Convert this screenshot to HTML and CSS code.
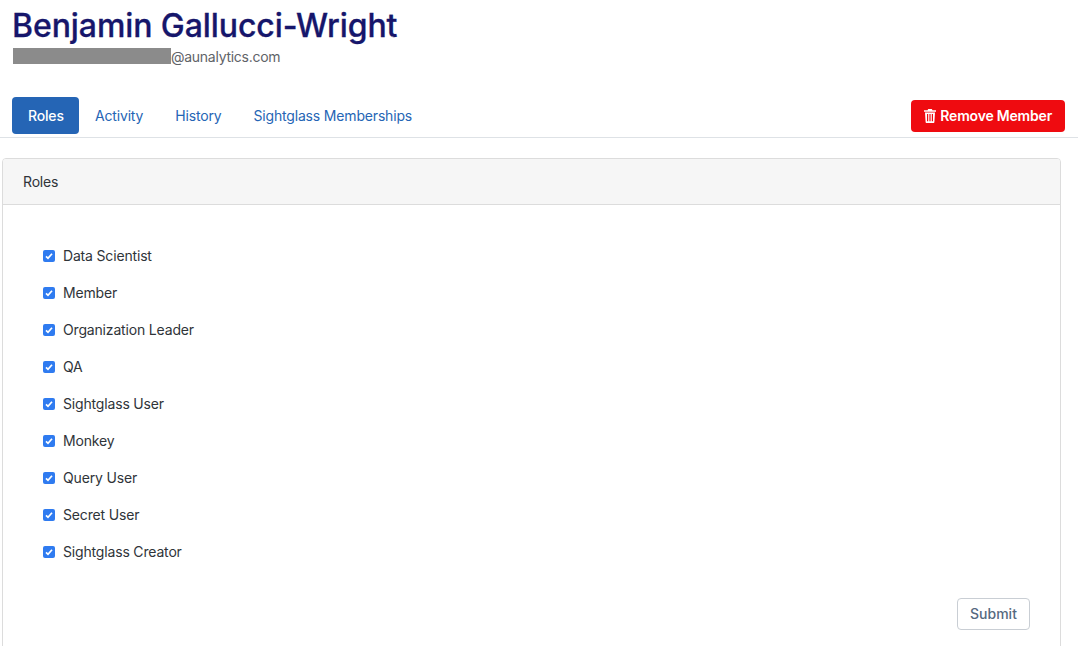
FILE: index.html
```html
<!DOCTYPE html>
<html lang="en">
<head>
<meta charset="utf-8">
<title>Member</title>
<link rel="stylesheet" href="styles.css">
</head>
<body>
<header class="head">
  <h1 class="name">Benjamin Gallucci-Wright</h1>
  <div class="email"><span class="redact"></span>@aunalytics.com</div>
</header>
<nav class="tabs">
  <a class="tab active">Roles</a>
  <a class="tab">Activity</a>
  <a class="tab">History</a>
  <a class="tab">Sightglass Memberships</a>
  <button class="remove">
    <svg class="trash" viewBox="0 0 12 14" width="12" height="14"><path fill="#fff" fill-rule="evenodd" d="M4.2 0h3.6l.7 1.3H12v1.4H0V1.3h3.5zM1 3.6h10l-.6 9.3c0 .6-.5 1.1-1.1 1.1H2.7c-.6 0-1.100-.5-1.100-1.100zM3 5v7.300h1.200V5zm2.400 0v7.300h1.200V5zM7.800 5v7.300H9V5z"/></svg>
    Remove Member
  </button>
</nav>
<section class="card">
  <div class="card-head">Roles</div>
  <div class="card-body">
    <ul class="roles">
      <li class="role"><span class="check"><svg viewBox="0 0 12 12" width="12" height="12"><path d="M3 6.300l2 2 4-4.600" fill="none" stroke="#fff" stroke-width="1.700"/></svg></span>Data Scientist</li>
      <li class="role"><span class="check"><svg viewBox="0 0 12 12" width="12" height="12"><path d="M3 6.300l2 2 4-4.600" fill="none" stroke="#fff" stroke-width="1.700"/></svg></span>Member</li>
      <li class="role"><span class="check"><svg viewBox="0 0 12 12" width="12" height="12"><path d="M3 6.300l2 2 4-4.600" fill="none" stroke="#fff" stroke-width="1.700"/></svg></span>Organization Leader</li>
      <li class="role"><span class="check"><svg viewBox="0 0 12 12" width="12" height="12"><path d="M3 6.300l2 2 4-4.600" fill="none" stroke="#fff" stroke-width="1.700"/></svg></span>QA</li>
      <li class="role"><span class="check"><svg viewBox="0 0 12 12" width="12" height="12"><path d="M3 6.300l2 2 4-4.600" fill="none" stroke="#fff" stroke-width="1.700"/></svg></span>Sightglass User</li>
      <li class="role"><span class="check"><svg viewBox="0 0 12 12" width="12" height="12"><path d="M3 6.300l2 2 4-4.600" fill="none" stroke="#fff" stroke-width="1.700"/></svg></span>Monkey</li>
      <li class="role"><span class="check"><svg viewBox="0 0 12 12" width="12" height="12"><path d="M3 6.300l2 2 4-4.600" fill="none" stroke="#fff" stroke-width="1.700"/></svg></span>Query User</li>
      <li class="role"><span class="check"><svg viewBox="0 0 12 12" width="12" height="12"><path d="M3 6.300l2 2 4-4.600" fill="none" stroke="#fff" stroke-width="1.700"/></svg></span>Secret User</li>
      <li class="role"><span class="check"><svg viewBox="0 0 12 12" width="12" height="12"><path d="M3 6.300l2 2 4-4.600" fill="none" stroke="#fff" stroke-width="1.700"/></svg></span>Sightglass Creator</li>
    </ul>
    <div class="actions"><button class="submit">Submit</button></div>
  </div>
</section>
</body>
</html>
```
FILE: styles.css
```css
* { box-sizing: border-box; }
html, body { height: 100%; overflow: hidden; }
body {
  margin: 0;
  background: #fff;
  font-family: Inter, "Liberation Sans", sans-serif;
  font-size: 14px;
  letter-spacing: -0.17px;
  color: #2f3439;
}
.head { padding: 7px 12px 0; height: 97px; }
.name {
  margin: 0;
  font-size: 32px;
  line-height: 38px;
  font-weight: 500;
  -webkit-text-stroke: 0.3px #16166b;
  color: #16166b;
  letter-spacing: -0.08px;
}
.email {
  display: flex;
  align-items: center;
  height: 22px;
  color: #5f6368;
  letter-spacing: -0.27px;
}
.redact {
  display: block;
  width: 158px;
  height: 16px;
  margin-left: 1px;
  background: #8b8b8b;
  filter: blur(0.6px);
}
.tabs {
  display: flex;
  align-items: flex-start;
  height: 41px;
  padding: 0 13px 0 12px;
  border-bottom: 1px solid #dee2e6;
}
.tab {
  display: block;
  height: 37px;
  line-height: 37px;
  padding: 0 16px;
  border-radius: 4px;
  color: #2565b5;
  letter-spacing: -0.17px;
  white-space: nowrap;
}
.tab.active { width: 67px; background: #2565b5; color: #fff; font-weight: 500; }
.remove {
  display: flex;
  align-items: center;
  gap: 4px;
  height: 32px;
  margin-left: auto;
  margin-top: 3px;
  padding: 0 13px 1px 13px;
  border: 0;
  border-radius: 4px;
  background: #ef0b10;
  color: #fff;
  font: 600 14px Inter, "Liberation Sans", sans-serif;
  letter-spacing: -0.2px;
}
.card {
  width: 1059px;
  height: 520px;
  margin: 20px 0 0 2px;
  border: 1px solid #dcdcdc;
  border-radius: 4px;
}
.card-head {
  height: 46px;
  line-height: 46px;
  padding: 0 20px;
  background: #f6f6f6;
  border-bottom: 1px solid #dcdcdc;
  border-radius: 3px 3px 0 0;
}
.card-body { padding: 32px 30px 0 40px; }
.roles { list-style: none; margin: 0; padding: 0; }
.role {
  display: flex;
  align-items: center;
  gap: 8px;
  height: 37px;
}
.check {
  display: flex;
  width: 12px;
  height: 12px;
  background: #2f7bf0;
  border-radius: 2px;
}
.actions { display: flex; justify-content: flex-end; margin-top: 28px; }
.submit {
  height: 32px;
  width: 73px;
  padding: 0 0 2px;
  background: #fff;
  border: 1px solid #c9ced4;
  border-radius: 4px;
  color: #56697f;
  font: 500 14px Inter, "Liberation Sans", sans-serif;
}
```
